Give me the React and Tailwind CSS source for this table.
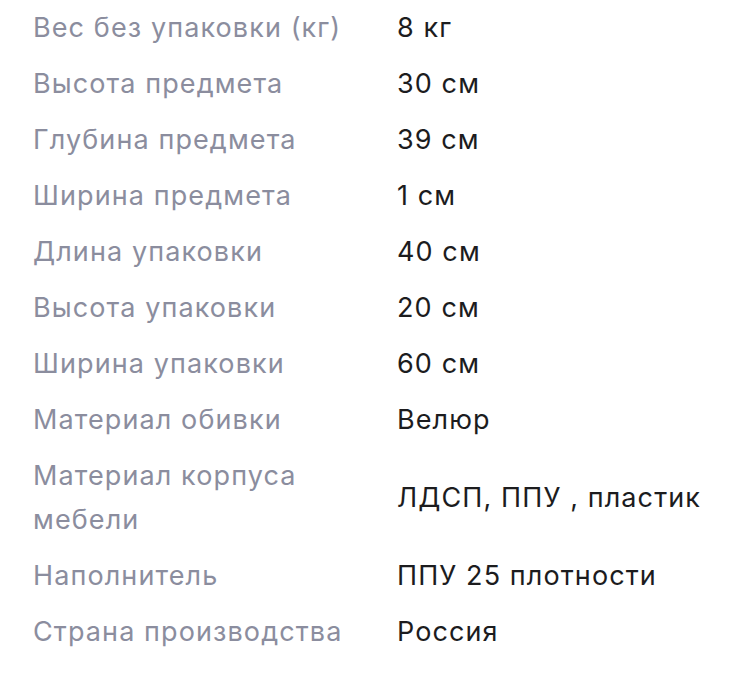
import React from "react";

const rows = [
  ["Вес без упаковки (кг)", "8 кг"],
  ["Высота предмета", "30 см"],
  ["Глубина предмета", "39 см"],
  ["Ширина предмета", "1 см"],
  ["Длина упаковки", "40 см"],
  ["Высота упаковки", "20 см"],
  ["Ширина упаковки", "60 см"],
  ["Материал обивки", "Велюр"],
  ["Материал корпуса мебели", "ЛДСП, ППУ , пластик"],
  ["Наполнитель", "ППУ 25 плотности"],
  ["Страна производства", "Россия"],
];

const App = () => {
  return (
    <div className="w-[750px] h-[681px] bg-white pl-[33px] font-['Inter','Roboto',sans-serif] text-[27px] leading-[44px] tracking-[1.1px]">
      {rows.map(([label, value]) => (
        <div key={label} className="flex items-center py-[6px]">
          <div className="w-[320px] text-[#8b8d9e]">{label}</div>
          <div className="ml-[44px] text-[#1c1c1e]">{value}</div>
        </div>
      ))}
    </div>
  );
};

export default App;
